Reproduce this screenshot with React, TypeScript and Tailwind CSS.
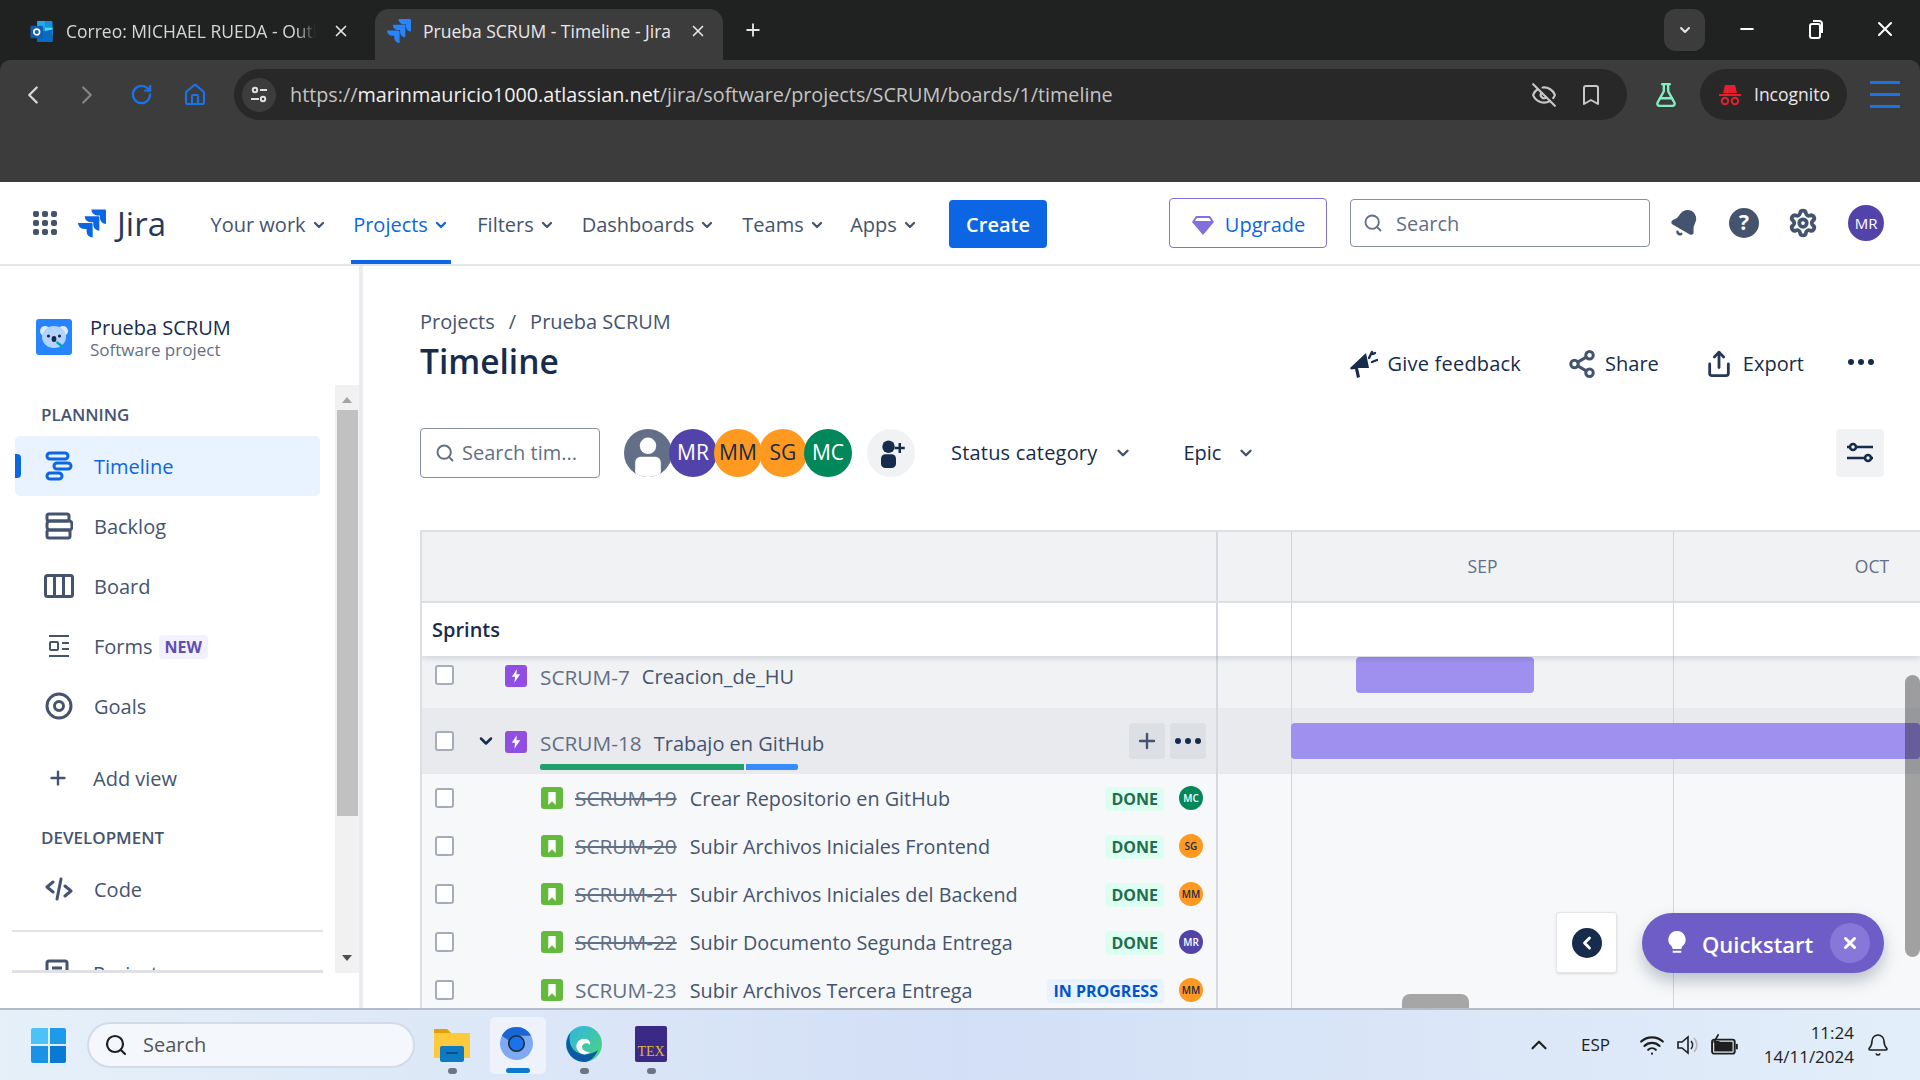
import { Bookmark, ChevronDown, ChevronLeft, ChevronRight, ChevronUp, EyeOff, FlaskConical, Minus, Plus, RotateCw, Search, Settings, Share, Share2, Wifi, X, Bell, Home } from "lucide-react";

const JIRA_PATH =
  "M11.571 11.513H0a5.218 5.218 0 0 0 5.232 5.215h2.13v2.057A5.215 5.215 0 0 0 12.575 24V12.518a1.005 1.005 0 0 0-1.005-1.005zm5.723-5.756H5.736a5.215 5.215 0 0 0 5.215 5.214h2.129v2.058a5.218 5.218 0 0 0 5.215 5.214V6.758a1.001 1.001 0 0 0-1.001-1.001zM23.013 0H11.455a5.215 5.215 0 0 0 5.215 5.215h2.129v2.057A5.215 5.215 0 0 0 24 12.483V1.005A1.001 1.001 0 0 0 23.013 0Z";

function JiraMark({ className }: { className: string }) {
  return (
    <svg viewBox="0 0 24 24" className={className} fill="currentColor">
      <path d={JIRA_PATH} />
    </svg>
  );
}

function OutlookIcon() {
  return (
    <svg viewBox="0 0 24 24" className="h-[23px] w-[24px] shrink-0">
      <rect x="7" y="1" width="16" height="22" rx="1.5" fill="#1490df" />
      <rect x="7" y="1" width="8" height="7" fill="#28a8ea" />
      <rect x="15" y="8" width="8" height="7" fill="#50d9ff" />
      <path d="M7 13l16-3v12a1 1 0 0 1-1 1H8a1 1 0 0 1-1-1z" fill="#0a6cc0" />
      <rect x="0" y="6" width="13" height="13" rx="1.5" fill="#0f5fb0" />
      <circle cx="6.5" cy="12.5" r="3" fill="none" stroke="#fff" strokeWidth="1.7" />
    </svg>
  );
}

function Dots({ color }: { color: string }) {
  return (
    <div className="flex items-center gap-[4px]">
      <div className={`h-[6px] w-[6px] rounded-full ${color}`} />
      <div className={`h-[6px] w-[6px] rounded-full ${color}`} />
      <div className={`h-[6px] w-[6px] rounded-full ${color}`} />
    </div>
  );
}

function BrowserTabs() {
  return (
    <div className="flex h-[60px] shrink-0 items-end bg-[#202222] text-[#d6d6d6]">
      <div className="flex h-[51px] w-[375px] items-center pb-[7px] pl-[30px]">
        <OutlookIcon />
        <span className="ml-[12px] w-[250px] overflow-hidden whitespace-nowrap text-[17.5px] [mask-image:linear-gradient(to_right,black_92%,transparent)]">Correo: MICHAEL RUEDA - Outlook</span>
        <X className="ml-[16px] h-[18px] w-[18px] text-[#e6e6e6]" strokeWidth={2.2} />
      </div>
      <div className="flex h-[51px] w-[348px] items-center rounded-t-[14px] bg-[#3c3c3c] pb-[7px] pl-[12px]">
        <JiraMark className="h-[24px] w-[24px] text-[#2684ff]" />
        <span className="ml-[12px] w-[250px] whitespace-nowrap text-[17.5px] text-[#e8e8e8]">Prueba SCRUM - Timeline - Jira</span>
        <X className="ml-[16px] h-[18px] w-[18px] text-[#e6e6e6]" strokeWidth={2.2} />
      </div>
      <Plus className="mb-[20px] ml-[20px] h-[20px] w-[20px] text-[#e6e6e6]" strokeWidth={2.2} />
      <div className="mb-[9px] ml-auto flex h-[42px] w-[41px] items-center justify-center rounded-[12px] bg-[#3c3c3c]">
        <ChevronDown className="h-[16px] w-[16px] text-[#e6e6e6]" strokeWidth={3} />
      </div>
      <div className="mb-[19px] ml-[32px] mr-[23px] flex items-center">
        <Minus className="h-[20px] w-[20px] text-white" strokeWidth={2.4} />
        <svg viewBox="0 0 16 20" className="ml-[51px] h-[20px] w-[16px]" fill="none" stroke="#fff" strokeWidth="2">
          <rect x="2" y="5" width="10" height="14" rx="2" />
          <path d="M5 2h6a3 3 0 0 1 3 3v9" />
        </svg>
        <X className="ml-[49px] h-[24px] w-[24px] text-white" strokeWidth={2} />
      </div>
    </div>
  );
}

function BrowserToolbar() {
  return (
    <div className="flex h-[122px] shrink-0 items-start rounded-tl-[10px] rounded-tr-[10px] bg-[#3c3c3c] pt-[9px]">
      <div className="flex h-[51px] w-[234px] items-center pl-[18px]">
        <ChevronLeft className="h-[30px] w-[30px] text-[#d9d9d9]" strokeWidth={1.8} />
        <ChevronRight className="ml-[24px] h-[30px] w-[30px] text-[#858585]" strokeWidth={1.8} />
        <RotateCw className="ml-[28px] h-[23px] w-[23px] text-[#1a73e8]" strokeWidth={2.4} />
        <Home className="ml-[30px] h-[24px] w-[24px] text-[#1a73e8]" strokeWidth={2.2} />
      </div>
      <div className="flex h-[51px] w-[1393px] items-center rounded-full bg-[#282828] pl-[8px] pr-[24px]">
        <div className="flex h-[34px] w-[34px] items-center justify-center rounded-full bg-[#3c3c3c]">
          <svg viewBox="0 0 20 20" className="h-[20px] w-[20px]" fill="none" stroke="#e0e0e0" strokeWidth="2">
            <circle cx="6" cy="5" r="2.2" />
            <path d="M11 5h7M2 14h8" />
            <circle cx="14" cy="14" r="2.2" />
          </svg>
        </div>
        <span className="ml-[14px] whitespace-nowrap text-[19.8px] text-[#c4c4c4]">
          https://<span className="text-[#f0f0f0]">marinmauricio1000.atlassian.net</span>/jira/software/projects/SCRUM/boards/1/timeline
        </span>
        <EyeOff className="ml-auto h-[26px] w-[26px] text-[#c7c7c7]" strokeWidth={2} />
        <Bookmark className="ml-[22px] h-[28px] w-[24px] text-[#c7c7c7]" strokeWidth={2} />
      </div>
      <div className="flex h-[51px] w-[73px] items-center justify-center pl-[4px]">
        <FlaskConical className="h-[26px] w-[26px] text-[#7ff0c0]" strokeWidth={2.2} />
      </div>
      <div className="flex h-[51px] w-[147px] items-center rounded-full bg-[#282828] pl-[18px]">
        <svg viewBox="0 0 24 24" className="h-[24px] w-[24px]" fill="#e5202e">
          <path d="M7 2h10l2 8H5zM1 11h22v2H1z" />
          <circle cx="7" cy="18" r="3.2" fill="none" stroke="#e5202e" strokeWidth="2" />
          <circle cx="17" cy="18" r="3.2" fill="none" stroke="#e5202e" strokeWidth="2" />
        </svg>
        <span className="ml-[12px] text-[17.5px] text-[#e8e8e8]">Incognito</span>
      </div>
      <div className="ml-[23px] flex h-[51px] w-[30px] flex-col justify-center gap-[9px]">
        <div className="h-[3px] bg-[#1a73e8]" />
        <div className="h-[3px] bg-[#1a73e8]" />
        <div className="h-[3px] bg-[#1a73e8]" />
      </div>
    </div>
  );
}

function NavItem({ label, active, width }: { label: string; active?: boolean; width: string }) {
  return (
    <div className={`relative flex h-full items-center justify-center gap-[5px] pt-[4px] ${width} ${active ? "text-[#0C66E4]" : "text-[#44546F]"}`}>
      <span className="text-[20px] font-medium">{label}</span>
      <ChevronDown className="h-[16px] w-[16px]" strokeWidth={3.4} />
      {active && <div className="absolute bottom-0 left-0 right-0 h-[4px] bg-[#0C66E4]" />}
    </div>
  );
}

function JiraNav() {
  return (
    <div className="flex h-[84px] shrink-0 items-center border-b-[2px] border-[#e4e5e8] bg-white">
      <div className="ml-[33px] grid h-[24px] w-[24px] grid-cols-3 gap-[3px]">
        {[0, 1, 2, 3, 4, 5, 6, 7, 8].map((i) => (
          <div key={i} className="rounded-[2px] bg-[#44546F]" />
        ))}
      </div>
      <JiraMark className="ml-[21px] h-[29px] w-[28px] text-[#0C66E4]" />
      <span className="ml-[11px] text-[33px] leading-none text-[#253858]">Jira</span>
      <div className="ml-[40px] flex h-full items-center">
        <NavItem label="Your work" width="w-[125px]" />
        <div className="w-[20px]" />
        <NavItem label="Projects" active width="w-[100px]" />
        <div className="w-[24px]" />
        <NavItem label="Filters" width="w-[82px]" />
        <div className="w-[24px]" />
        <NavItem label="Dashboards" width="w-[135px]" />
        <div className="w-[25px]" />
        <NavItem label="Teams" width="w-[85px]" />
        <div className="w-[22px]" />
        <NavItem label="Apps" width="w-[72px]" />
      </div>
      <div className="ml-[29px] mt-[1px] flex h-[48px] w-[98px] items-center justify-center rounded-[4px] bg-[#0C66E4] pt-[2px] text-[20px] font-semibold text-white">Create</div>
      <div className="ml-[122px] flex h-[50px] w-[158px] items-center justify-center gap-[10px] rounded-[4px] border border-[#8270DB] pt-[3px] text-[20px] text-[#0C66E4]">
        <svg viewBox="0 0 24 24" className="h-[24px] w-[24px]" fill="#8270DB">
          <path d="M5 3h14l4 6-11 13L1 9zM6 5l-2 3h16l-2-3z" fillRule="evenodd" />
        </svg>
        Upgrade
      </div>
      <div className="ml-[23px] flex h-[48px] w-[300px] items-center rounded-[4px] border border-[#8590A2] pl-[12px] text-[20px] text-[#626F86]">
        <Search className="h-[20px] w-[20px]" strokeWidth={2.2} />
        <span className="ml-[13px] mt-[1px]">Search</span>
      </div>
      <Bell className="ml-[20px] h-[30px] w-[30px] rotate-[30deg] fill-[#44546F] text-[#44546F]" strokeWidth={2} />
      <div className="ml-[29px] flex h-[30px] w-[30px] items-center justify-center rounded-full bg-[#44546F] text-[21px] font-bold text-white">?</div>
      <Settings className="ml-[29px] h-[30px] w-[30px] text-[#44546F]" strokeWidth={3} />
      <div className="ml-[30px] flex h-[36px] w-[36px] items-center justify-center rounded-full bg-[#5243AA] text-[15px] text-white">MR</div>
    </div>
  );
}

function KoalaIcon() {
  return (
    <svg viewBox="0 0 36 36" className="h-[36px] w-[36px] shrink-0">
      <rect width="36" height="36" rx="3" fill="#2684ff" />
      <circle cx="9" cy="12" r="5" fill="#deebff" />
      <circle cx="27" cy="12" r="5" fill="#deebff" />
      <ellipse cx="18" cy="18" rx="12" ry="11" fill="#b3d4ff" />
      <circle cx="12.5" cy="17" r="1.6" fill="#172b4d" />
      <circle cx="23.5" cy="17" r="1.6" fill="#172b4d" />
      <ellipse cx="18" cy="20" rx="2.4" ry="3" fill="#172b4d" />
      <path d="M21 22l7 5-2 2-6-5z" fill="#00a3bf" />
    </svg>
  );
}

function SideRow({ label, icon, active, badge }: { label: string; icon: React.ReactNode; active?: boolean; badge?: boolean }) {
  return (
    <div className={`relative ml-[15px] flex h-[60px] w-[305px] items-center rounded-[5px] pl-[28px] ${active ? "bg-[#E9F2FF] text-[#0C66E4]" : "text-[#44546F]"}`}>
      {active && <div className="absolute left-0 top-[18px] h-[24px] w-[6px] rounded-r-[4px] bg-[#0C66E4]" />}
      <div className="flex w-[32px] justify-center">{icon}</div>
      <span className="ml-[19px] mt-[2px] text-[20px]">{label}</span>
      {badge && <span className="ml-[6px] mt-[2px] rounded-[4px] bg-[#F3F0FF] px-[6px] py-[1px] text-[16px] font-bold leading-[22px] text-[#5E4DB2]">NEW</span>}
    </div>
  );
}

function TimelineGlyph() {
  return (
    <svg viewBox="0 0 28 30" className="h-[30px] w-[28px]" fill="none" stroke="currentColor" strokeWidth="3">
      <rect x="2" y="2" width="21" height="6" rx="3" />
      <rect x="9" y="12" width="17" height="6" rx="3" />
      <rect x="2" y="22" width="15" height="6" rx="3" />
    </svg>
  );
}

function BacklogGlyph() {
  return (
    <svg viewBox="0 0 28 28" className="h-[28px] w-[28px]" fill="none" stroke="currentColor" strokeWidth="3">
      <rect x="2" y="2" width="22" height="7" rx="2" />
      <rect x="2" y="9" width="25" height="9" rx="3" />
      <rect x="2" y="18" width="23" height="8" rx="2" />
    </svg>
  );
}

function BoardGlyph() {
  return (
    <svg viewBox="0 0 30 24" className="h-[24px] w-[30px]" fill="none" stroke="currentColor" strokeWidth="3">
      <rect x="1.5" y="1.5" width="27" height="21" rx="2" />
      <path d="M10.5 2v20M19.5 2v20" />
    </svg>
  );
}

function FormsGlyph() {
  return (
    <svg viewBox="0 0 24 24" className="h-[24px] w-[24px]" fill="none" stroke="currentColor" strokeWidth="2">
      <path d="M2 2h20M15 9h7M15 15h7M2 22h20" />
      <rect x="3" y="8" width="8" height="8" rx="1" />
    </svg>
  );
}

function GoalsGlyph() {
  return (
    <svg viewBox="0 0 28 28" className="h-[28px] w-[28px]" fill="none" stroke="currentColor" strokeWidth="3">
      <circle cx="14" cy="14" r="12" />
      <circle cx="14" cy="14" r="4.5" />
    </svg>
  );
}

function CodeGlyph() {
  return (
    <svg viewBox="0 0 28 24" className="h-[24px] w-[28px]" fill="none" stroke="currentColor" strokeWidth="3" strokeLinecap="round" strokeLinejoin="round">
      <path d="M8 5L2 10l6 5M20 9l6 5-6 5M16 2l-4 20" />
    </svg>
  );
}

function Sidebar() {
  return (
    <div className="flex w-[363px] shrink-0 flex-col border-r-[4px] border-[#ebecf0] bg-white">
      <div className="flex h-[119px] shrink-0 items-start pl-[36px] pt-[53px]">
        <KoalaIcon />
        <div className="ml-[18px] -mt-[3px]">
          <div className="text-[20px] font-medium leading-[24px] text-[#172B4D]">Prueba SCRUM</div>
          <div className="text-[17px] leading-[20px] text-[#626F86]">Software project</div>
        </div>
      </div>
      <div className="flex h-[588px] shrink-0">
        <div className="flex w-[335px] flex-col">
          <div className="flex-1 overflow-hidden pt-[19px]">
            <div className="pl-[41px] text-[17px] font-semibold leading-[22px] text-[#44546F]">PLANNING</div>
            <div className="h-[10px]" />
            <SideRow label="Timeline" icon={<TimelineGlyph />} active />
            <SideRow label="Backlog" icon={<BacklogGlyph />} />
            <SideRow label="Board" icon={<BoardGlyph />} />
            <SideRow label="Forms" icon={<FormsGlyph />} badge />
            <SideRow label="Goals" icon={<GoalsGlyph />} />
            <div className="h-[12px]" />
            <div className="ml-[15px] flex h-[60px] items-center pl-[32px] text-[#44546F]">
              <Plus className="h-[22px] w-[22px]" strokeWidth={2.6} />
              <span className="ml-[24px] mt-[1px] text-[20px]">Add view</span>
            </div>
            <div className="pl-[41px] pt-[19px] text-[17px] font-semibold leading-[22px] text-[#44546F]">DEVELOPMENT</div>
            <div className="h-[10px]" />
            <SideRow label="Code" icon={<CodeGlyph />} />
            <div className="mx-[12px] mt-[11px] h-[2px] bg-[#e1e3e7]" />
            <div className="ml-[15px] mt-[27px] flex items-start pl-[30px] text-[#44546F]">
              <svg viewBox="0 0 24 28" className="h-[28px] w-[24px]" fill="none" stroke="currentColor" strokeWidth="3">
                <rect x="2" y="2" width="20" height="24" rx="2" />
                <path d="M7 9h10M7 14h10" />
              </svg>
              <span className="ml-[24px] whitespace-nowrap text-[20px] leading-[30px]">Project pages</span>
            </div>
          </div>
          <div className="mx-[12px] h-[3px] bg-[#dfe1e6]" />
        </div>
        <div className="relative w-[24px] bg-[#f1f1f1]">
          <div className="absolute left-[7px] top-[12px] h-0 w-0 border-x-[5px] border-b-[6px] border-x-transparent border-b-[#a3a3a3]" />
          <div className="absolute left-[2px] top-[25px] h-[406px] w-[21px] bg-[#c1c1c1]" />
          <div className="absolute bottom-[12px] left-[7px] h-0 w-0 border-x-[5px] border-t-[6px] border-x-transparent border-t-[#505050]" />
        </div>
      </div>
    </div>
  );
}

function Avatar({ label, bg, fg, big }: { label: string; bg: string; fg: string; big?: boolean }) {
  return (
    <div className={`flex shrink-0 items-center justify-center rounded-full ${bg} ${fg} ${big ? "-ml-[3px] h-[48px] w-[48px] text-[21px] font-medium" : "h-[24px] w-[24px] text-[10px] font-semibold"}`}>
      {label}
    </div>
  );
}

function TrackCell({ bar }: { bar?: string }) {
  return (
    <div className="relative flex flex-1">
      <div className="w-[74px] border-r border-[#d0d4db]" />
      <div className="w-[382px] border-r border-[#d0d4db]" />
      {bar && <div className={`absolute rounded-[4px] bg-[#9F8FEF] ${bar}`} />}
    </div>
  );
}

function Check() {
  return <div className="h-[20px] w-[19px] shrink-0 rounded-[3px] border-[2px] border-[#a5adba] bg-white" />;
}

function EpicIcon() {
  return (
    <div className="flex h-[22px] w-[22px] shrink-0 items-center justify-center rounded-[3px] bg-[#904EE2]">
      <svg viewBox="0 0 12 16" className="h-[14px] w-[10px]" fill="#fff">
        <path d="M7 0L1 9h4l-1 7 7-10H6.5z" />
      </svg>
    </div>
  );
}

function StoryIcon() {
  return (
    <div className="flex h-[22px] w-[22px] shrink-0 items-center justify-center rounded-[3px] bg-[#63BA3C]">
      <svg viewBox="0 0 10 14" className="h-[13px] w-[10px]" fill="#fff">
        <path d="M1 0h8v14L5 10l-4 4z" />
      </svg>
    </div>
  );
}

const stories = [
  { key: "SCRUM-19", title: "Crear Repositorio en GitHub", done: true, who: "MC", bg: "bg-[#00875A]", fg: "text-white" },
  { key: "SCRUM-20", title: "Subir Archivos Iniciales Frontend", done: true, who: "SG", bg: "bg-[#FF991F]", fg: "text-[#172B4D]" },
  { key: "SCRUM-21", title: "Subir Archivos Iniciales del Backend", done: true, who: "MM", bg: "bg-[#FF991F]", fg: "text-[#172B4D]" },
  { key: "SCRUM-22", title: "Subir Documento Segunda Entrega", done: true, who: "MR", bg: "bg-[#5243AA]", fg: "text-white" },
  { key: "SCRUM-23", title: "Subir Archivos Tercera Entrega", done: false, who: "MM", bg: "bg-[#FF991F]", fg: "text-[#172B4D]" }
];

function TimelineTable() {
  return (
    <div className="relative flex-1 overflow-hidden border-l-[2px] border-t-[2px] border-[#dcdfe4]">
      <div className="flex h-[69px] bg-[#f1f2f4]">
        <div className="w-[796px] shrink-0 border-r-[2px] border-[#d5d8de]" />
        <div className="flex flex-1 text-[17.5px] text-[#626F86]">
          <div className="w-[74px] border-r border-[#d0d4db]" />
          <div className="flex w-[382px] items-center justify-center border-r border-[#d0d4db]">SEP</div>
          <div className="flex flex-1 items-center justify-center pl-[150px]">OCT</div>
        </div>
      </div>
      <div className="relative z-10 flex h-[55px] border-t-[2px] border-[#dcdfe4] bg-white shadow-[0_3px_5px_rgba(9,30,66,0.12)]">
        <div className="flex w-[796px] shrink-0 items-center border-r-[2px] border-[#d5d8de] pl-[10px] text-[20px] font-semibold text-[#172B4D]">Sprints</div>
        <TrackCell />
      </div>
      <div className="flex h-[52px] bg-[#f1f2f4]">
        <div className="flex w-[796px] shrink-0 items-start border-r-[2px] border-[#d5d8de] pl-[13px] pt-[9px]">
          <Check />
          <div className="ml-[51px]"><EpicIcon /></div>
          <span className="ml-[13px] -mt-[3px] text-[20.8px] text-[#626F86]">SCRUM-7</span>
          <span className="ml-[12px] -mt-[3px] text-[20px] text-[#44546F]">Creacion_de_HU</span>
        </div>
        <TrackCell bar="left-[138px] top-[1px] h-[36px] w-[178px]" />
      </div>
      <div className="flex h-[66px] bg-[#e9eaee]">
        <div className="flex w-[796px] shrink-0 items-start border-r-[2px] border-[#d5d8de] pl-[13px] pt-[23px]">
          <Check />
          <ChevronDown className="ml-[22px] h-[20px] w-[20px] text-[#172B4D]" strokeWidth={3} />
          <div className="ml-[9px]"><EpicIcon /></div>
          <div className="relative ml-[13px] -mt-[3px]">
            <span className="text-[20.8px] text-[#626F86]">SCRUM-18</span>
            <span className="ml-[12px] text-[20px] text-[#44546F]">Trabajo en GitHub</span>
            <div className="mt-[5px] flex h-[6px] gap-[2px]">
              <div className="w-[204px] rounded-l-[2px] bg-[#22A06B]" />
              <div className="w-[52px] rounded-r-[2px] bg-[#388BFF]" />
            </div>
          </div>
          <div className="ml-auto mr-[10px] -mt-[8px] flex gap-[5px]">
            <div className="flex h-[36px] w-[36px] items-center justify-center rounded-[4px] bg-[#dcdfe4]"><Plus className="h-[24px] w-[24px] text-[#44546F]" strokeWidth={2.4} /></div>
            <div className="flex h-[36px] w-[36px] items-center justify-center rounded-[4px] bg-[#dcdfe4]"><Dots color="bg-[#172B4D]" /></div>
          </div>
        </div>
        <TrackCell bar="left-[73px] top-[15px] h-[36px] right-0" />
      </div>
      {stories.map((s) => (
        <div key={s.key} className="flex h-[48px] bg-[#f7f8f9]">
          <div className="flex w-[796px] shrink-0 items-center border-r-[2px] border-[#d5d8de] pl-[13px]">
            <Check />
            <div className="ml-[87px]"><StoryIcon /></div>
            <span className={`ml-[12px] mt-[2px] text-[20.8px] text-[#626F86] ${s.done ? "line-through" : ""}`}>{s.key}</span>
            <span className="ml-[13px] mt-[2px] whitespace-nowrap text-[19.8px] text-[#44546F]">{s.title}</span>
            <span className={`ml-auto mt-[1px] rounded-[4px] px-[6px] text-[16px] font-bold leading-[24px] ${s.done ? "bg-[#DCFFF1] text-[#216E4E]" : "bg-[#E9F2FF] text-[#0055CC]"}`}>
              {s.done ? "DONE" : "IN PROGRESS"}
            </span>
            <div className="ml-[15px] mr-[13px]"><Avatar label={s.who} bg={s.bg} fg={s.fg} /></div>
          </div>
          <TrackCell />
        </div>
      ))}
      <div className="absolute right-0 top-[143px] h-[282px] w-[15px] rounded-full bg-black/35" />
      <div className="absolute bottom-0 left-[980px] h-[14px] w-[67px] rounded-t-[8px] bg-[#a6a6a6]" />
      <div className="absolute bottom-[35px] left-[1134px] flex h-[61px] w-[61px] items-center justify-center rounded-[3px] border border-[#e4e5e8] bg-white shadow-sm">
        <div className="flex h-[30px] w-[30px] items-center justify-center rounded-full bg-[#172B4D]">
          <ChevronLeft className="h-[20px] w-[20px] text-white" strokeWidth={3.4} />
        </div>
      </div>
      <div className="absolute bottom-[35px] left-[1220px] flex h-[60px] w-[242px] items-center rounded-full bg-[#6E5DC6] pl-[26px] shadow-[0_8px_16px_rgba(9,30,66,0.25)]">
        <svg viewBox="0 0 20 28" className="h-[24px] w-[18px]" fill="#fff">
          <path d="M10 0a10 10 0 0 1 6 18l-1 3H5l-1-3a10 10 0 0 1 6-18zM5 23h10v2.5H5z" />
        </svg>
        <span className="ml-[16px] mt-[3px] text-[22px] font-semibold text-white">Quickstart</span>
        <div className="ml-auto mr-[14px] flex h-[40px] w-[40px] items-center justify-center rounded-full bg-[#8777D9]">
          <X className="h-[18px] w-[18px] text-white" strokeWidth={4} />
        </div>
      </div>
    </div>
  );
}

function Content() {
  return (
    <div className="flex min-w-0 flex-1 flex-col overflow-hidden bg-white pl-[57px]">
      <div className="flex h-[71px] shrink-0 items-end text-[20px] text-[#44546F]">
        <span>Projects</span>
        <span className="mx-[14px]">/</span>
        <span>Prueba SCRUM</span>
      </div>
      <div className="flex h-[49px] shrink-0 items-center pr-[46px]">
        <h1 className="text-[33.5px] font-semibold text-[#172B4D]">Timeline</h1>
        <div className="ml-auto flex items-center pt-[4px] text-[20px] font-medium text-[#172B4D]">
          <svg viewBox="0 0 30 30" className="h-[30px] w-[30px]" fill="#172B4D">
            <path d="M2 19L18 4l3 15H10l2 9-3 1-2-9-4 .5z" />
            <path d="M21 9l3-6M24 13l5-2M25 5l2-1" stroke="#172B4D" strokeWidth="2.4" strokeLinecap="round" />
          </svg>
          <span className="ml-[10px] mr-[2px] tracking-[0.01em]">Give feedback</span>
          <Share2 className="ml-[44px] h-[30px] w-[30px] text-[#44546F]" strokeWidth={2.4} />
          <span className="ml-[8px]">Share</span>
          <Share className="ml-[46px] h-[30px] w-[28px] text-[#253858]" strokeWidth={2.4} />
          <span className="ml-[10px]">Export</span>
          <div className="ml-[44px] -mt-[4px]"><Dots color="bg-[#172B4D]" /></div>
        </div>
      </div>
      <div className="mt-[41px] flex h-[52px] shrink-0 items-center pr-[36px]">
        <div className="flex h-[50px] w-[180px] items-center rounded-[4px] border border-[#8590A2] pl-[14px] text-[20px] text-[#626F86]">
          <Search className="h-[20px] w-[20px]" strokeWidth={2.4} />
          <span className="ml-[7px]">Search tim...</span>
        </div>
        <div className="ml-[24px] flex items-center">
          <div className="flex h-[48px] w-[48px] items-end justify-center overflow-hidden rounded-full bg-[#626F86]">
            <svg viewBox="0 0 24 24" className="h-[44px] w-[44px]" fill="#fff">
              <circle cx="12" cy="7" r="4.5" />
              <rect x="5" y="13" width="14" height="11" rx="3" />
            </svg>
          </div>
          <Avatar big label="MR" bg="bg-[#5243AA]" fg="text-white" />
          <Avatar big label="MM" bg="bg-[#FF991F]" fg="text-[#172B4D]" />
          <Avatar big label="SG" bg="bg-[#FF991F]" fg="text-[#172B4D]" />
          <Avatar big label="MC" bg="bg-[#00875A]" fg="text-white" />
        </div>
        <div className="ml-[15px] flex h-[48px] w-[48px] items-center justify-center rounded-full bg-[#f1f2f4]">
          <svg viewBox="0 0 24 24" className="h-[30px] w-[30px]" fill="#172B4D">
            <circle cx="10" cy="7" r="5" />
            <rect x="4" y="13" width="12" height="11" rx="3.5" />
            <path d="M18 4h2v3h3v2h-3v3h-2V9h-3V7h3z" />
          </svg>
        </div>
        <span className="ml-[36px] text-[20px] font-medium tracking-[0.01em] text-[#172B4D]">Status category</span>
        <ChevronDown className="ml-[17px] h-[18px] w-[18px] text-[#44546F]" strokeWidth={3.2} />
        <span className="ml-[51px] text-[20px] font-medium text-[#172B4D]">Epic</span>
        <ChevronDown className="ml-[16px] h-[18px] w-[18px] text-[#44546F]" strokeWidth={3.2} />
        <div className="ml-auto flex h-[48px] w-[48px] items-center justify-center rounded-[4px] bg-[#f1f2f4]">
          <svg viewBox="0 0 28 24" className="h-[24px] w-[28px]" fill="none" stroke="#172B4D" strokeWidth="2.6">
            <path d="M9 6h18M1 6h3M20 17H1M25 17h2" />
            <circle cx="7" cy="6" r="3" />
            <circle cx="22" cy="17" r="3" />
          </svg>
        </div>
      </div>
      <div className="mt-[51px] flex min-h-0 flex-1">
        <TimelineTable />
      </div>
    </div>
  );
}

function Taskbar() {
  return (
    <div className="flex h-[72px] shrink-0 items-center border-t-[2px] border-[#b5bcc7] bg-gradient-to-r from-[#e6f0f9] via-[#d3dff6] to-[#e2eef9] text-[#1f1f1f]">
      <div className="ml-[31px] grid h-[35px] w-[35px] grid-cols-2 gap-[2px]">
        <div className="rounded-tl-[2px] bg-[#4cc2f8]" />
        <div className="rounded-tr-[2px] bg-[#1d9ae8]" />
        <div className="rounded-bl-[2px] bg-[#1a93e4]" />
        <div className="rounded-br-[2px] bg-[#0b78d4]" />
      </div>
      <div className="ml-[21px] flex h-[46px] w-[328px] items-center rounded-full border-[2px] border-[#d2dbe8] bg-[#f4f8fd] pl-[15px]">
        <Search className="h-[24px] w-[24px]" strokeWidth={2.2} />
        <span className="ml-[15px] text-[20px] text-[#555]">Search</span>
      </div>
      <div className="relative ml-[19px] h-[57px] w-[36px]">
        <svg viewBox="0 0 36 36" className="absolute left-0 top-[9px] h-[36px] w-[36px]">
          <path d="M0 3h13l4 4h19v25H0z" fill="#ffc93c" />
          <path d="M0 3h13l4 4H0z" fill="#e0a00a" />
          <rect x="6" y="20" width="24" height="16" rx="2" fill="#0e7ac4" />
          <rect x="12" y="26" width="12" height="2" fill="#0a4f88" />
        </svg>
        <div className="absolute bottom-0 left-[14px] h-[6px] w-[9px] rounded-full bg-[#6e7580]" />
      </div>
      <div className="relative ml-[20px] flex h-[57px] w-[56px] justify-center rounded-[5px] bg-[#edf2fb]">
        <svg viewBox="0 0 36 36" className="absolute left-[9px] top-[9px] h-[35px] w-[35px]">
          <circle cx="18" cy="18" r="17" fill="#7fa9f2" />
          <path d="M3 10a17 17 0 0 1 30 0H18a8 8 0 0 0-8 5z" fill="#1a66d6" />
          <circle cx="18" cy="18" r="8" fill="#1a73e8" stroke="#1f2937" strokeWidth="1.6" />
        </svg>
        <div className="absolute bottom-[1px] h-[5px] w-[24px] rounded-full bg-[#0b78d4]" />
      </div>
      <div className="relative ml-[20px] h-[57px] w-[36px]">
        <svg viewBox="0 0 36 36" className="absolute left-0 top-[9px] h-[36px] w-[36px]">
          <defs>
            <linearGradient id="edgeA" x1="0" y1="0" x2="1" y2="1">
              <stop offset="0" stopColor="#2fb3e6" />
              <stop offset="1" stopColor="#4fd67a" />
            </linearGradient>
          </defs>
          <circle cx="18" cy="18" r="18" fill="url(#edgeA)" />
          <path d="M18 36A18 18 0 0 1 5 6c-4 8 0 20 11 22 6 1 12-1 16-4-3 7-8 12-14 12z" fill="#0c59a4" />
          <path d="M16 28c-8-4-7-13 0-15 6-1 9 3 8 6-2-3-8-2-8 2 0 3 4 5 8 5-2 2-5 3-8 2z" fill="#fff" />
        </svg>
        <div className="absolute bottom-0 left-[14px] h-[6px] w-[9px] rounded-full bg-[#6e7580]" />
      </div>
      <div className="relative ml-[33px] h-[57px] w-[32px]">
        <div className="absolute left-0 top-[9px] flex h-[36px] w-[32px] items-end justify-center rounded-[2px] bg-[#3a2a86] pb-[3px] font-['Liberation_Serif',serif] text-[14px] leading-none text-[#e0b63c]">TEX</div>
        <div className="absolute bottom-0 left-[12px] h-[6px] w-[9px] rounded-full bg-[#6e7580]" />
      </div>
      <ChevronUp className="ml-[859px] h-[26px] w-[26px] text-[#1f1f1f]" strokeWidth={2} />
      <span className="ml-[29px] text-[17px]">ESP</span>
      <Wifi className="ml-[29px] h-[26px] w-[26px]" strokeWidth={2} />
      <svg viewBox="0 0 26 26" className="ml-[10px] h-[26px] w-[26px]" fill="none" stroke="#1f1f1f" strokeWidth="1.6">
        <path d="M3 10v6h4l6 5V5l-6 5z" />
        <path d="M16 9a6 6 0 0 1 0 8" />
        <path d="M19 6a10 10 0 0 1 0 14" stroke="#b4b4b4" />
      </svg>
      <svg viewBox="0 0 26 22" className="ml-[10px] h-[24px] w-[28px]" fill="none" stroke="#1f1f1f" strokeWidth="1.8">
        <rect x="1" y="6" width="21" height="13" rx="2" />
        <rect x="3" y="8" width="17" height="9" fill="#1f1f1f" stroke="none" />
        <path d="M24 10v5" />
        <path d="M7 1L3 8h4l-2 6" strokeWidth="1.5" />
      </svg>
      <div className="ml-[21px] flex w-[94px] flex-col items-end text-[17px] leading-[24px]">
        <span>11:24</span>
        <span className="whitespace-nowrap">14/11/2024</span>
      </div>
      <Bell className="ml-[12px] h-[24px] w-[24px]" strokeWidth={1.6} />
    </div>
  );
}

export default function App() {
  return (
    <div className="flex h-[1080px] w-[1920px] flex-col overflow-hidden bg-[#202222] font-['Open_Sans',sans-serif]">
      <BrowserTabs />
      <BrowserToolbar />
      <JiraNav />
      <div className="flex min-h-0 flex-1 bg-white">
        <Sidebar />
        <Content />
      </div>
      <Taskbar />
    </div>
  );
}
